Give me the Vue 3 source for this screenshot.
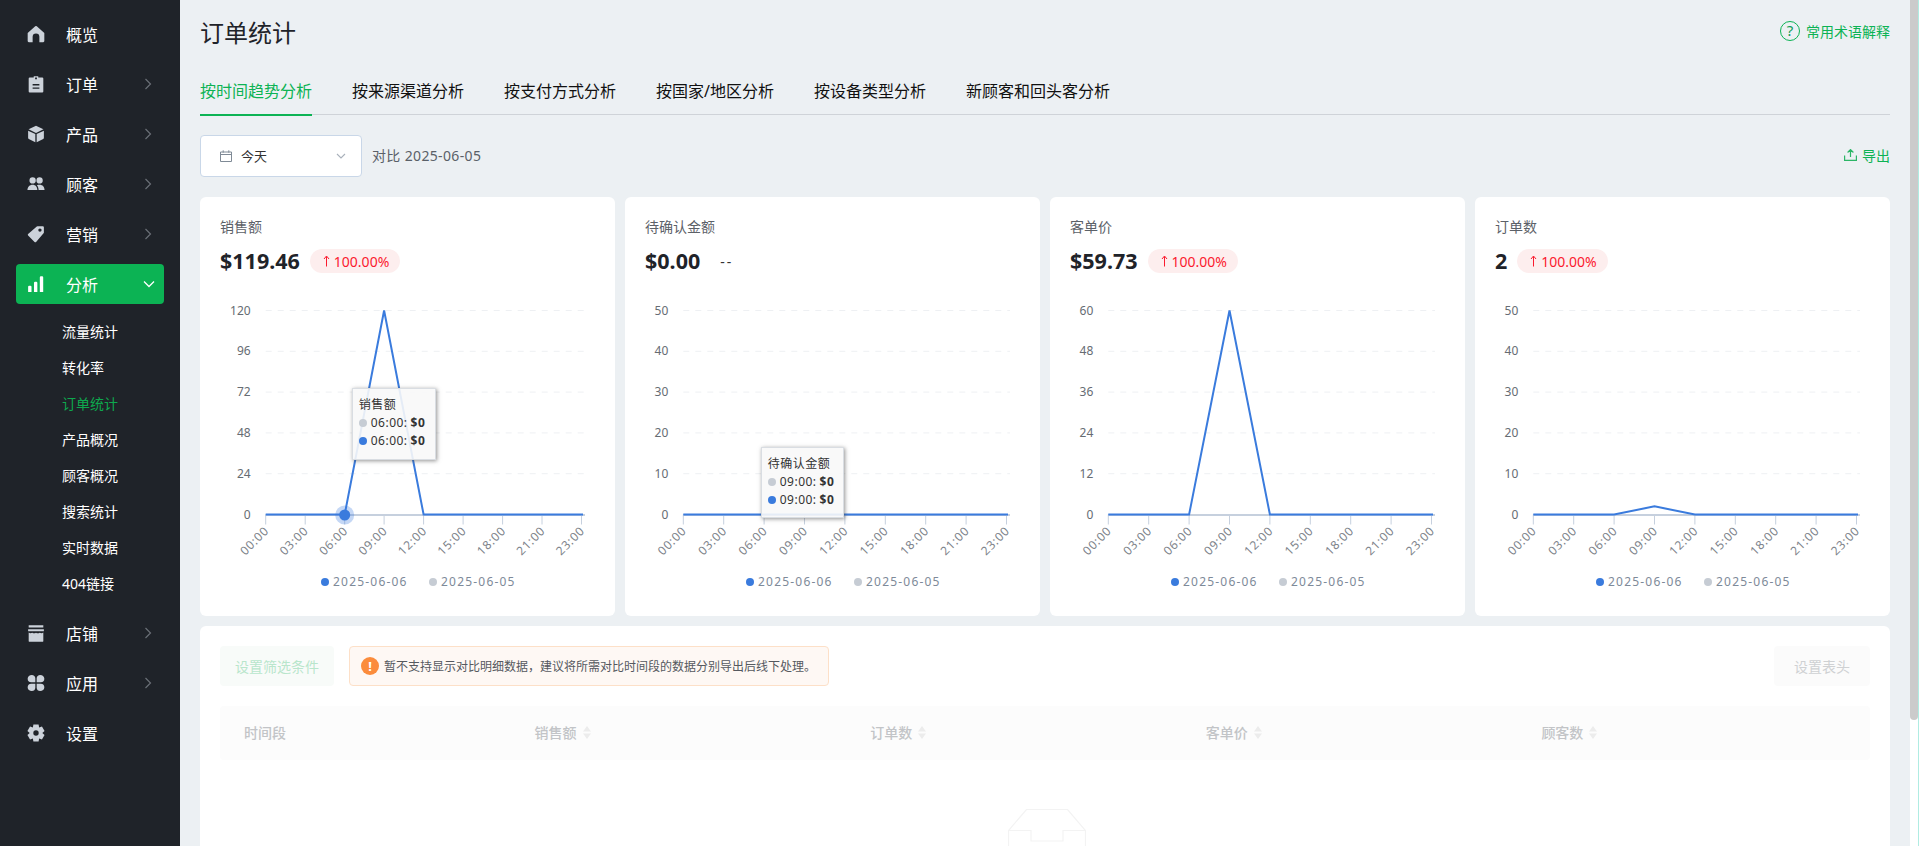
<script setup>
function gearPath() {
  const cx = 8, cy = 8, teeth = 6
  let d = ''
  for (let i = 0; i < teeth; i++) {
    const a = (i / teeth) * Math.PI * 2 - Math.PI / 2
    const w = 0.3, o = 0.62
    const pts = [[5.6, a - o + 0.1], [7.8, a - w], [7.8, a + w], [5.6, a + o - 0.1]]
    for (const [r, t] of pts) {
      d += (d ? 'L' : 'M') + (cx + r * Math.cos(t)).toFixed(2) + ' ' + (cy + r * Math.sin(t)).toFixed(2)
    }
  }
  return d + 'Z M8 5.6a2.4 2.4 0 1 0 0 4.8a2.4 2.4 0 1 0 0-4.8Z'
}

const gray = '#ccd2da'
const dark = '#1f2329'
const icons = {
  home: [{ d: 'M8 .8a1 1 0 0 1 .7.3l6.7 6v7.2a1 1 0 0 1-1 1H11V10.5a3 3 0 0 0-6 0v4.8H1.6a1 1 0 0 1-1-1V7.1l6.7-6A1 1 0 0 1 8 .8Z', f: gray }],
  order: [
    { d: 'M2.5 2.2H6V1h4v1.2h3.5a1 1 0 0 1 1 1V14.6a1 1 0 0 1-1 1H2.5a1 1 0 0 1-1-1V3.200a1 1 0 0 1 1-1Z', f: gray },
    { d: 'M5 8h6v1.300H5ZM5 11h6v1.300H5ZM7.200 2.200h1.600v1.600H7.200Z', f: dark }
  ],
  box: [
    { d: 'M8 .6l6.600 3.200L8 7 1.400 3.800Z', f: gray },
    { d: 'M1 5l6.400 3.100v7.300L1.600 12.500a1 1 0 0 1-.6-.9Z', f: gray },
    { d: 'M15 5L8.600 8.100v7.300l5.800-2.900a1 1 0 0 0 .6-.9Z', f: gray }
  ],
  user: [
    { d: 'M5 2a2.800 2.800 0 1 1 0 5.600A2.800 2.800 0 0 1 5 2ZM11.200 2a2.800 2.800 0 1 1 0 5.600 2.800 2.800 0 0 1 0-5.600Z', f: gray },
    { d: 'M.4 13.400C.4 10.500 2.400 8.600 5 8.600s4.200 1.900 4.200 4.800ZM10.300 13.400c0-1.800-.5-3.300-1.500-4.400.7-.3 1.500-.4 2.400-.4 2.700 0 4.400 1.900 4.400 4.800Z', f: gray }
  ],
  tag: [{ d: 'M9.400 1H14a1 1 0 0 1 1 1v4.700a1 1 0 0 1-.3.700L8.100 15a1 1 0 0 1-1.400 0L1 9.300a1 1 0 0 1 0-1.400L8.700 1.300A1 1 0 0 1 9.400 1Zm2.100 2a1.500 1.500 0 1 0 0 3 1.500 1.500 0 0 0 0-3Z', f: gray }],
  bars: [{ d: 'M1 10.500a1 1 0 0 1 1-1h1a1 1 0 0 1 1 1V15H1ZM6.200 7a1 1 0 0 1 1-1h1a1 1 0 0 1 1 1v8h-3ZM11.400 2a1 1 0 0 1 1-1h1a1 1 0 0 1 1 1v13h-3Z', f: '#ffffff' }],
  store: [
    { d: 'M1.500 1h13v2.200h-13ZM1 4.600h14v1.800H1ZM1.500 7.600c1 .8 2 .8 3.200.2 1 .6 2.200.6 3.300 0 1 .6 2.200.6 3.300 0 1.100.6 2.200.6 3.200-.2v7.400a.8.800 0 0 1-.8.800H2.300a.8.800 0 0 1-.8-.8Z', f: gray }
  ],
  apps: [{ d: 'M4.300.8C6 .8 7.400 2.100 7.400 3.800v3.600H3.800A3.300 3.300 0 0 1 .6 4C.6 2.200 2.300.8 4.300.8ZM11.700.8c2 0 3.700 1.400 3.700 3.200a3.300 3.300 0 0 1-3.200 3.400H8.600V3.800C8.600 2.100 10 .8 11.700.8ZM3.800 8.600h3.600v3.600c0 1.700-1.400 3-3.100 3C2.300 15.200.6 13.800.6 12a3.300 3.300 0 0 1 3.200-3.400ZM8.600 8.600h3.600a3.300 3.300 0 0 1 3.200 3.400c0 1.800-1.700 3.200-3.700 3.200-1.700 0-3.100-1.300-3.100-3Z', f: gray }],
  gear: [{ d: gearPath(), f: gray }]
}

const menuTop = [
  { label: '概览', icon: icons.home },
  { label: '订单', icon: icons.order, arrow: true },
  { label: '产品', icon: icons.box, arrow: true },
  { label: '顾客', icon: icons.user, arrow: true },
  { label: '营销', icon: icons.tag, arrow: true },
  { label: '分析', icon: icons.bars, open: true }
]
const subMenu = [
  { label: '流量统计' }, { label: '转化率' }, { label: '订单统计', active: true }, { label: '产品概况' },
  { label: '顾客概况' }, { label: '搜索统计' }, { label: '实时数据' }, { label: '404链接' }
]
const menuBottom = [
  { label: '店铺', icon: icons.store, arrow: true },
  { label: '应用', icon: icons.apps, arrow: true },
  { label: '设置', icon: icons.gear }
]

const tabs = ['按时间趋势分析', '按来源渠道分析', '按支付方式分析', '按国家/地区分析', '按设备类型分析', '新顾客和回头客分析']
const xLabels = ['00:00', '03:00', '06:00', '09:00', '12:00', '15:00', '18:00', '21:00', '23:00']

const Y0 = 241.5
const YSTEP = 40.8

function buildChart(left, yTicks, peak) {
  const lastTick = 381.5
  const step = (lastTick - left) / 8
  const ticks = xLabels.map((label, i) => ({ label, x: +(left + i * step).toFixed(1) }))
  const maxV = yTicks[0]
  const yOf = (v) => Y0 - (v / maxV) * YSTEP * 5
  const pts = [
    [left, Y0], [ticks[1].x, Y0], [ticks[2].x, Y0], [ticks[3].x, yOf(peak)],
    [ticks[4].x, Y0], [lastTick + 1.5, Y0]
  ]
  return {
    left, ticks,
    grid: yTicks.map((label, i) => ({ label, y: +(Y0 - (5 - i) * YSTEP).toFixed(1) })),
    line: pts.map((p) => p.join(',')).join(' ')
  }
}

const cards = [
  {
    title: '销售额', value: '$119.46', pct: '100.00%',
    chart: buildChart(65.7, [120, 96, 72, 48, 24, 0], 120),
    marker: 2,
    tip: { name: '销售额', time: '06:00', left: 151.7, top: 115, width: 84, height: 72 }
  },
  {
    title: '待确认金额', value: '$0.00', pct: '',
    chart: buildChart(58.3, [50, 40, 30, 20, 10, 0], 0),
    tip: { name: '待确认金额', time: '09:00', left: 135.7, top: 173.7, width: 83, height: 71 }
  },
  { title: '客单价', value: '$59.73', pct: '100.00%', chart: buildChart(58.3, [60, 48, 36, 24, 12, 0], 60) },
  { title: '订单数', value: '2', pct: '100.00%', chart: buildChart(58.3, [50, 40, 30, 20, 10, 0], 2) }
]

const columns = [
  { label: '时间段' },
  { label: '销售额', sort: true },
  { label: '订单数', sort: true },
  { label: '客单价', sort: true },
  { label: '顾客数', sort: true }
]

function tipStyle(t) {
  return { left: t.left + 'px', top: t.top + 'px', width: t.width + 'px', height: t.height + 'px' }
}
</script>

<template>
  <div class="shell">
    <aside class="side">
      <div v-for="m in menuTop" :key="m.label" class="item" :class="{ on: m.open }">
        <svg class="ico" viewBox="0 0 16 16" width="18" height="18">
          <path v-for="(p, i) in m.icon" :key="i" :d="p.d" :fill="p.f" fill-rule="evenodd" />
        </svg>
        <span class="item-label">{{ m.label }}</span>
        <svg v-if="m.arrow" class="chev" viewBox="0 0 8 12" width="8" height="12"><path d="M1.500 1l5 5-5 5" fill="none" stroke="#6a6f76" stroke-width="1.200" /></svg>
        <svg v-if="m.open" class="chev-open" viewBox="0 0 12 8" width="12" height="8"><path d="M1 1.500l5 5 5-5" fill="none" stroke="#fff" stroke-width="1.300" /></svg>
      </div>
      <div class="sub">
        <div v-for="s in subMenu" :key="s.label" class="sub-item" :class="{ active: s.active }">{{ s.label }}</div>
      </div>
      <div v-for="m in menuBottom" :key="m.label" class="item">
        <svg class="ico" viewBox="0 0 16 16" width="18" height="18">
          <path v-for="(p, i) in m.icon" :key="i" :d="p.d" :fill="p.f" fill-rule="evenodd" />
        </svg>
        <span class="item-label">{{ m.label }}</span>
        <svg v-if="m.arrow" class="chev" viewBox="0 0 8 12" width="8" height="12"><path d="M1.500 1l5 5-5 5" fill="none" stroke="#6a6f76" stroke-width="1.200" /></svg>
      </div>
    </aside>

    <main class="main">
      <header class="head">
        <h1 class="title">订单统计</h1>
        <div class="help"><span class="help-ico">?</span>常用术语解释</div>
      </header>

      <nav class="tabs">
        <div v-for="(t, i) in tabs" :key="t" class="tab" :class="{ cur: i === 0 }">{{ t }}</div>
      </nav>

      <div class="tools">
        <div class="picker">
          <svg class="cal" viewBox="0 0 12 12" width="12" height="12"><path d="M.5 2h11v9.500H.5ZM.5 4.500h11M3.200.3v2.400M8.800.3v2.400" fill="none" stroke="#7f8a96" stroke-width="1" /></svg>
          <span class="picker-text">今天</span>
          <svg class="picker-chev" viewBox="0 0 10 6" width="10" height="6"><path d="M1 1l4 4 4-4" fill="none" stroke="#a9b1bb" stroke-width="1.100" /></svg>
        </div>
        <span class="compare">对比 2025-06-05</span>
        <div class="export">
          <svg viewBox="0 0 13 12" width="13" height="12"><path d="M.6 6.500v4.900h11.800V6.500M6.500 8V1M3.600 3.500l2.900-2.900 2.900 2.900" fill="none" stroke="#2bb566" stroke-width="1.200" /></svg>
          导出
        </div>
      </div>

      <section class="cards">
        <article v-for="c in cards" :key="c.title" class="card">
          <div class="card-head">
            <div class="card-title">{{ c.title }}</div>
            <div class="card-row">
              <span class="value">{{ c.value }}</span>
              <span v-if="c.pct" class="badge">
                <svg viewBox="0 0 7 12" width="7" height="12"><path d="M3.500 11.500V1.500M1 4l2.500-3L6 4" fill="none" stroke="#fb1a2e" stroke-width="1" /></svg>
                {{ c.pct }}
              </span>
              <span v-else class="none">--</span>
            </div>
          </div>
          <div class="chart">
            <svg class="plot" viewBox="0 0 415 343" width="415" height="343">
              <g v-for="g in c.chart.grid" :key="g.label">
                <line v-if="g.label !== 0" :x1="c.chart.left" x2="385" :y1="g.y" :y2="g.y" stroke="#eef0f3" stroke-dasharray="6 6" />
                <text class="y-label" :x="c.chart.left - 15" :y="g.y + 4" text-anchor="end">{{ g.label }}</text>
              </g>
              <line :x1="c.chart.left" x2="385" :y1="Y0 + 0.5" :y2="Y0 + 0.5" stroke="#c6d0de" stroke-width="2" />
              <g v-for="t in c.chart.ticks" :key="t.label">
                <line :x1="t.x" :x2="t.x" :y1="Y0" :y2="Y0 + 10" stroke="#c6d0de" />
                <text class="x-label" :transform="`translate(${t.x + 4} ${Y0 + 17}) rotate(-45)`" text-anchor="end">{{ t.label }}</text>
              </g>
              <polyline :points="c.chart.line" fill="none" stroke="#3a7bdd" stroke-width="2" stroke-linejoin="miter" />
              <g v-if="c.marker !== undefined">
                <circle :cx="c.chart.ticks[c.marker].x" :cy="Y0 + 0.5" r="9.500" fill="#3a7bdd" opacity="0.3" />
                <circle :cx="c.chart.ticks[c.marker].x" :cy="Y0 + 0.5" r="5.500" fill="#3a7bdd" />
              </g>
              <circle cx="125" cy="309" r="4" fill="#3a7bdd" />
              <text class="legend" x="133" y="313">2025-06-06</text>
              <circle cx="233" cy="309" r="4" fill="#c6ccd4" />
              <text class="legend" x="241" y="313">2025-06-05</text>
            </svg>
            <div v-if="c.tip" class="tip" :style="tipStyle(c.tip)">
              <div class="tip-row">{{ c.tip.name }}</div>
              <div class="tip-row"><i class="dot dot-gray"></i>{{ c.tip.time }}: <b>$0</b></div>
              <div class="tip-row"><i class="dot dot-blue"></i>{{ c.tip.time }}: <b>$0</b></div>
            </div>
          </div>
        </article>
      </section>

      <section class="table-card">
        <div class="table-tools">
          <button class="btn-filter">设置筛选条件</button>
          <div class="alert">
            <span class="alert-ico">!</span>
            暂不支持显示对比明细数据，建议将所需对比时间段的数据分别导出后线下处理。
          </div>
          <button class="btn-cols">设置表头</button>
        </div>
        <div class="thead">
          <div v-for="col in columns" :key="col.label" class="th">
            {{ col.label }}
            <svg v-if="col.sort" class="sort" viewBox="0 0 8 13" width="8" height="13"><path d="M4 0l4 5.500H0ZM0 7.500h8L4 13Z" fill="#ececec" /></svg>
          </div>
        </div>
        <div class="empty">
          <svg viewBox="0 0 78 60" width="78" height="60"><path d="M.5 60V21.500L18.500.5h41l18 21V60M.5 21.500h22.500v10.500h32V21.500h22.500" fill="none" stroke="#f3f3f3" stroke-width="1.200" /></svg>
        </div>
      </section>
    </main>

    <div class="scroll"><div class="thumb"></div></div>
  </div>
</template>

<style scoped>
.shell {
  display: flex;
  width: 100%;
  height: 846px;
  overflow: hidden;
  background: #ecf0f3;
  font-family: "Noto Sans", "Noto Sans CJK SC", sans-serif;
  color: #1f2329;
}
.side {
  flex: 0 0 180px;
  display: flex;
  flex-direction: column;
  background: #1f2329;
  padding-top: 9px;
  color: #fff;
}
.item {
  display: flex;
  align-items: center;
  flex: none;
  height: 40px;
  margin: 5px 16px;
  padding-left: 11px;
  border-radius: 4px;
  font-size: 16px;
  position: relative;
}
.item.on { background: #0cb354; }
.ico { flex: none; }
.item-label { margin-left: 21px; }
.chev { position: absolute; left: 128px; top: 14px; }
.chev-open { position: absolute; left: 127px; top: 16px; }
.sub { padding: 5px 0 6px; flex: none; }
.sub-item {
  height: 36px;
  line-height: 36px;
  padding-left: 62px;
  font-size: 14px;
  color: #fff;
}
.sub-item.active { color: #0ea84e; }
.main {
  flex: 1;
  min-width: 0;
  padding: 14px 20px 0;
}
.head {
  display: flex;
  align-items: center;
  justify-content: space-between;
  height: 38px;
}
.title {
  margin: 0;
  font-size: 24px;
  font-weight: 400;
  line-height: 38px;
  color: #1f2329;
}
.help {
  display: flex;
  align-items: center;
  font-size: 14px;
  color: #0cb354;
  margin-bottom: 4px;
}
.help-ico {
  width: 20px;
  height: 20px;
  box-sizing: border-box;
  border: 1.2px solid #0cb354;
  border-radius: 50%;
  margin-right: 6px;
  text-align: center;
  line-height: 17px;
  font-size: 15px;
  color: #0f9d58;
}
.tabs {
  display: flex;
  gap: 40px;
  height: 43px;
  margin-top: 20px;
  box-sizing: border-box;
  border-bottom: 1px solid #cfd3d8;
}
.tab {
  height: 44px;
  line-height: 38px;
  box-sizing: border-box;
  font-size: 16px;
  color: #111;
}
.tab.cur {
  color: #0cb354;
  border-bottom: 2px solid #0cb354;
}
.tools {
  display: flex;
  align-items: center;
  height: 42px;
  margin-top: 20px;
}
.picker {
  display: flex;
  align-items: center;
  width: 162px;
  height: 42px;
  box-sizing: border-box;
  padding: 0 15px 0 19px;
  background: #fff;
  border: 1px solid #c9d7e8;
  border-radius: 4px;
}
.picker-text { margin-left: 9px; margin-bottom: 2px; font-size: 13px; color: #333; flex: 1; }
.compare { margin-left: 10px; margin-bottom: 2px; font-size: 14px; letter-spacing: 0.35px; color: #5a6068; }
.export {
  margin-left: auto;
  margin-bottom: 2px;
  display: flex;
  align-items: center;
  gap: 5px;
  font-size: 14px;
  color: #0cb354;
}
.cards {
  display: grid;
  grid-template-columns: repeat(4, 415px);
  gap: 10px;
  margin-top: 20px;
}
.card {
  background: #fff;
  border-radius: 6px;
  padding-top: 20px;
  overflow: hidden;
}
.card-head { padding-left: 20px; }
.card-title {
  font-size: 14px;
  line-height: 20px;
  color: #5c6168;
}
.card-row {
  display: flex;
  align-items: center;
  height: 24px;
  margin-top: 12px;
}
.value {
  font-size: 21.500px;
  font-weight: 700;
  line-height: 24px;
  color: #1f2329;
}
.badge {
  display: flex;
  align-items: center;
  gap: 4px;
  height: 24px;
  margin-left: 10px;
  padding: 0 11px 0 13px;
  border-radius: 12px;
  background: #fdeeee;
  color: #fb1a2e;
  font-size: 14px;
  white-space: nowrap;
}
.none { margin-left: 20px; font-size: 14px; letter-spacing: 2px; color: #333; }
.chart { position: relative; height: 343px; }
.plot { display: block; }
.y-label { font-size: 12px; fill: #666c73; }
.x-label { font-size: 12px; fill: #7d838a; letter-spacing: 0.8px; }
.legend { font-size: 12px; fill: #7e8a99; letter-spacing: 1.2px; }
.tip {
  position: absolute;
  box-sizing: border-box;
  padding: 7px 6px;
  background: rgba(248, 248, 248, 0.9);
  border: 1px solid #d9dde2;
  box-shadow: 1px 1px 4px rgba(60, 60, 60, 0.55);
  font-size: 12px;
  color: #333;
  white-space: nowrap;
}
.tip-row { height: 18px; line-height: 18px; display: flex; align-items: center; letter-spacing: 0.5px; }
.tip-row b { margin-left: 3px; font-weight: 700; }
.dot { width: 8px; height: 8px; border-radius: 50%; margin-right: 4px; flex: none; }
.dot-gray { background: #c6ccd4; }
.dot-blue { background: #3a7bdd; }
.table-card {
  margin-top: 10px;
  padding: 20px;
  height: 400px;
  background: #fff;
  border-radius: 6px;
}
.table-tools { display: flex; align-items: stretch; height: 40px; }
.btn-filter, .btn-cols {
  border: 0;
  border-radius: 4px;
  font: inherit;
  font-size: 14px;
  padding: 0;
}
.btn-filter { width: 114px; background: #f8fbf9; color: #b9e6cc; }
.btn-cols { width: 96px; margin-left: auto; background: #fbfbfb; color: #cfd1d3; }
.alert {
  display: flex;
  align-items: center;
  margin-left: 15px;
  padding: 0 14px 0 11px;
  box-sizing: border-box;
  width: 480px;
  background: #fef8f4;
  border: 1px solid #fde0c8;
  border-radius: 4px;
  font-size: 12px;
  color: #55595f;
  white-space: nowrap;
}
.alert-ico {
  flex: none;
  width: 18px;
  height: 18px;
  margin-right: 5px;
  border-radius: 50%;
  background: #fb8c3c;
  color: #fff;
  font-size: 13px;
  font-weight: 700;
  line-height: 18px;
  text-align: center;
}
.thead {
  display: grid;
  grid-template-columns: 290.600px repeat(4, 335.600px);
  height: 54px;
  margin-top: 20px;
  padding-bottom: 2px;
  box-sizing: border-box;
  background: #fcfcfc;
  border-radius: 4px;
}
.th {
  display: flex;
  align-items: center;
  gap: 6px;
  padding-left: 24px;
  font-size: 14px;
  font-weight: 500;
  color: #c2c4c7;
}
.sort { flex: none; }
.empty { display: flex; justify-content: center; margin-top: 49px; padding-left: 3px; }
.scroll {
  flex: 0 0 9px;
  box-sizing: border-box;
  background: #fff;
  border-right: 1px solid #b0ece2;
}
.thumb {
  height: 720px;
  background: #cbcbcb;
  border-radius: 0 0 4px 4px;
}
</style>

<style>
html, body { margin: 0; overflow: hidden; background: #ecf0f3; }
</style>
